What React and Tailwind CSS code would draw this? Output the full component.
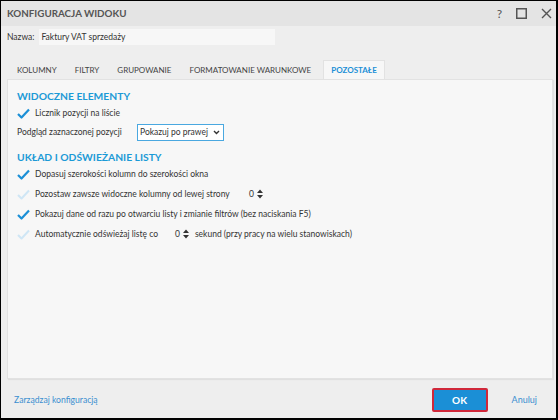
function Check({ on }) {
  return (
    <svg width="13" height="11" viewBox="0 0 13 11" className="shrink-0">
      {on ? (
        <path d="M1 6 L4.5 9.5 L12 1.5" fill="none" stroke="#1b8fd6" strokeWidth="2.2" strokeLinejoin="round" />
      ) : (
        <path d="M1 6 L4.5 9.5 L12 1.5" fill="none" stroke="#cfe6f5" strokeWidth="2" strokeLinejoin="round" />
      )}
    </svg>
  );
}

function Spinner({ value }) {
  return (
    <span className="inline-flex items-center gap-[3px] text-[#333]">
      {value}
      <svg width="6" height="10" viewBox="0 0 6 10">
        <path d="M0 4 L3 0.5 L6 4 Z M0 6 L3 9.5 L6 6 Z" fill="#333" />
      </svg>
    </span>
  );
}

function Row({ on, children }) {
  return (
    <div className="flex h-[20px] items-center gap-[5px] whitespace-nowrap pl-[9px]">
      <Check on={on} />
      <div className="flex items-center">{children}</div>
    </div>
  );
}

export default function App() {
  const tabs = ["KOLUMNY", "FILTRY", "GRUPOWANIE", "FORMATOWANIE WARUNKOWE"];
  return (
    <div
      className="flex h-[420px] w-[558px] flex-col whitespace-nowrap border-b-2 border-l border-r-2 border-t border-black bg-[#eeeeee] text-[8.5px] text-[#333]"
      style={{ fontFamily: 'Lato, "Noto Sans", sans-serif' }}
    >
      <div className="flex h-[25px] items-center bg-[#e4e4e4] pl-[6px] pr-[4px]">
        <span className="text-[9.8px] font-bold text-[#555]">KONFIGURACJA WIDOKU</span>
        <div className="ml-auto flex items-center gap-[14px] text-[#555]">
          <span className="text-[12px]">?</span>
          <svg width="11" height="11" viewBox="0 0 11 11">
            <rect x="0.75" y="0.75" width="9.5" height="9.5" fill="none" stroke="#555" strokeWidth="1.5" />
          </svg>
          <svg width="11" height="11" viewBox="0 0 11 11">
            <path d="M1 1 L10 10 M10 1 L1 10" stroke="#555" strokeWidth="1.4" />
          </svg>
        </div>
      </div>

      <div className="mt-[3px] flex h-[16px] items-center gap-[5px] pl-[6px]">
        <span>Nazwa:</span>
        <div className="flex h-[16px] w-[236px] items-center bg-[#f7f7f7] pl-[2px]">Faktury VAT sprzedaży</div>
      </div>

      <div className="ml-[6px] mt-[15px] flex h-[19px] items-end text-[8px] text-[#444]">
        <div className="flex h-[19px] items-center pl-[1px]">
          {tabs.map((t) => (
            <span key={t} className="px-[9px]">
              {t}
            </span>
          ))}
        </div>
        <div className="ml-[3px] flex h-[19px] items-center border-x border-t border-[#e2e2e2] bg-[#f7f7f7] px-[7px] font-bold text-[#1b8fd6]">
          POZOSTAŁE
        </div>
      </div>

      <div className="ml-[6px] mr-[3px] flex-1 border border-[#e2e2e2] bg-[#f7f7f7] pt-[9px] shadow-[1px_1px_1px_rgba(0,0,0,0.06)]">
        <div className="pl-[9px] text-[10.3px] font-bold leading-[14px] text-[#1b9ad6]">WIDOCZNE ELEMENTY</div>
        <Row on>Licznik pozycji na liście</Row>
        <div className="flex h-[18px] items-center pl-[9px]">
          <span className="w-[120px]">Podgląd zaznaczonej pozycji</span>
          <div className="flex h-[17px] items-center gap-[5px] border border-[#4aa8e0] bg-white pl-[2px] pr-[3px]">
            Pokazuj po prawej
            <svg width="7" height="5" viewBox="0 0 7 5">
              <path d="M1 1 L3.5 3.5 L6 1" fill="none" stroke="#333" strokeWidth="1.4" />
            </svg>
          </div>
        </div>
        <div className="mt-[9px] pl-[9px] text-[10.3px] font-bold leading-[14px] text-[#1b9ad6]">UKŁAD I ODŚWIEŻANIE LISTY</div>
        <Row on>Dopasuj szerokości kolumn do szerokości okna</Row>
        <Row>
          <span className="w-[214px]">Pozostaw zawsze widoczne kolumny od lewej strony</span>
          <Spinner value="0" />
        </Row>
        <Row on>Pokazuj dane od razu po otwarciu listy i zmianie filtrów (bez naciskania F5)</Row>
        <Row>
          <span className="w-[140px]">Automatycznie odświeżaj listę co</span>
          <Spinner value="0" />
          <span className="ml-[6px]">sekund (przy pracy na wielu stanowiskach)</span>
        </Row>
      </div>

      <div className="flex h-[39px] items-center pl-[13px] pr-[19px] pt-[3px]">
        <span className="text-[8.6px] text-[#3a8fd0]">Zarządzaj konfiguracją</span>
        <div className="ml-auto flex h-[24px] w-[56px] items-center justify-center rounded-[2px] border-2 border-[#d0283a] bg-[#1b8fd6] text-[10px] font-bold text-white">
          OK
        </div>
        <span className="ml-[24px] text-[9px] text-[#3a8fd0]">Anuluj</span>
      </div>
    </div>
  );
}
